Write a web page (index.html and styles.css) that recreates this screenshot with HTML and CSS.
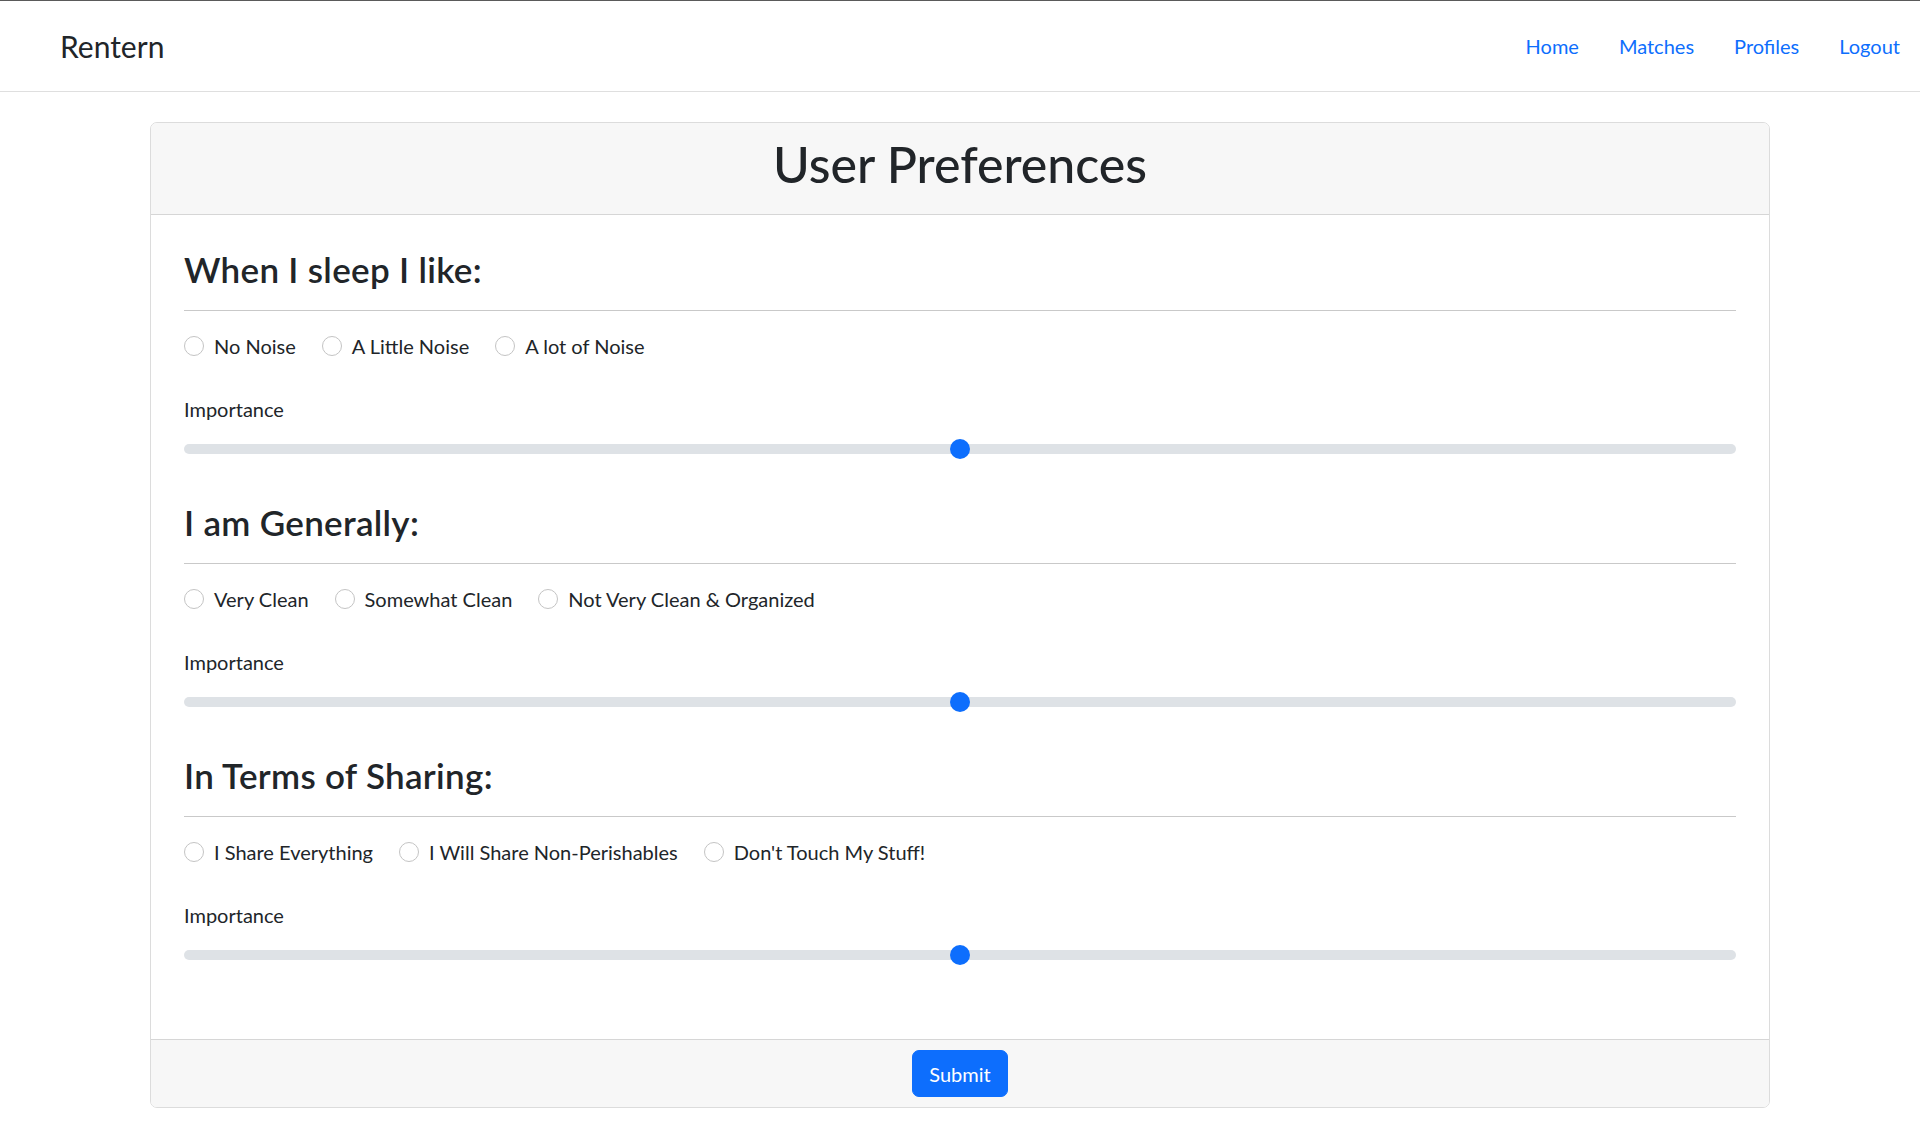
FILE: index.html
```html
<!DOCTYPE html>
<html lang="en">
<head>
<meta charset="utf-8">
<title>Rentern - User Preferences</title>
<link rel="stylesheet" href="styles.css">
</head>
<body>
<nav class="navbar">
  <a class="brand" href="#">Rentern</a>
  <ul class="nav">
    <li><a class="nav-link" href="#">Home</a></li>
    <li><a class="nav-link" href="#">Matches</a></li>
    <li><a class="nav-link" href="#">Profiles</a></li>
    <li><a class="nav-link" href="#">Logout</a></li>
  </ul>
</nav>
<main class="container">
  <form class="card">
    <div class="card-header"><h1 class="title">User Preferences</h1></div>
    <div class="card-body">
      <section class="pref">
        <h3 class="pref-title">When I sleep I like:</h3>
        <hr class="rule">
        <div class="options">
          <label class="check"><input type="radio" name="sleep" class="radio"><span>No Noise</span></label>
          <label class="check"><input type="radio" name="sleep" class="radio"><span>A Little Noise</span></label>
          <label class="check"><input type="radio" name="sleep" class="radio"><span>A lot of Noise</span></label>
        </div>
        <div class="field-label">Importance</div>
        <input type="range" class="range" min="0" max="10" value="5">
      </section>
      <section class="pref">
        <h3 class="pref-title">I am Generally:</h3>
        <hr class="rule">
        <div class="options">
          <label class="check"><input type="radio" name="clean" class="radio"><span>Very Clean</span></label>
          <label class="check"><input type="radio" name="clean" class="radio"><span>Somewhat Clean</span></label>
          <label class="check"><input type="radio" name="clean" class="radio"><span>Not Very Clean &amp; Organized</span></label>
        </div>
        <div class="field-label">Importance</div>
        <input type="range" class="range" min="0" max="10" value="5">
      </section>
      <section class="pref">
        <h3 class="pref-title">In Terms of Sharing:</h3>
        <hr class="rule">
        <div class="options">
          <label class="check"><input type="radio" name="share" class="radio"><span>I Share Everything</span></label>
          <label class="check"><input type="radio" name="share" class="radio"><span>I Will Share Non-Perishables</span></label>
          <label class="check"><input type="radio" name="share" class="radio"><span>Don't Touch My Stuff!</span></label>
        </div>
        <div class="field-label">Importance</div>
        <input type="range" class="range" min="0" max="10" value="5">
      </section>
    </div>
    <div class="card-footer"><button type="button" class="btn">Submit</button></div>
  </form>
</main>
</body>
</html>
```

FILE: styles.css
```css
* { box-sizing: border-box; }
html, body { margin: 0; padding: 0; }
body {
  font-family: "Lato", "Open Sans", sans-serif;
  font-size: 20px;
  line-height: 1.5;
  color: #212529;
  background: #fff;
  border-top: 1px solid #5a5a5a;
}
.navbar {
  display: flex;
  align-items: center;
  justify-content: space-between;
  height: 91px;
  padding-left: 61px;
  border-bottom: 1px solid #dfdfdf;
}
.brand {
  font-size: 30px;
  line-height: 40px;
  color: #212529;
  text-decoration: none;
  margin-left: -1px;
}
.nav {
  display: flex;
  list-style: none;
  margin: 0;
  padding: 0;
}
.nav-link {
  display: block;
  padding: 0 20px;
  font-size: 20px;
  line-height: 30px;
  color: #0d6efd;
  text-decoration: none;
}
.container {
  width: 1620px;
  margin: 30px auto 0;
}
.card {
  display: block;
  border: 1px solid #dcdcdc;
  border-radius: 7px;
  overflow: hidden;
}
.card-header {
  background: #f7f7f7;
  border-bottom: 1px solid #d6d6d6;
  padding: 11px 20px 10px;
  text-align: center;
}
.title {
  margin: 0 0 10px;
  font-size: 50px;
  line-height: 60px;
  font-weight: 500;
}
.card-body {
  padding: 33px 33px 69px;
}
.pref + .pref { margin-top: 37px; }
.pref-title {
  margin: 0;
  font-size: 35px;
  line-height: 42px;
  font-weight: 600;
  letter-spacing: 0.3px;
}
.rule {
  margin: 20px 0;
  border: 0;
  border-top: 1px solid #c9c9c9;
  height: 0;
}
.options {
  display: flex;
  height: 30px;
  align-items: center;
}
.check {
  display: flex;
  align-items: center;
  margin-right: 26px;
  line-height: 30px;
}
.radio {
  appearance: none;
  -webkit-appearance: none;
  width: 20px;
  height: 20px;
  margin: 0 10px 0 0;
  border: 1px solid #c4c4c4;
  border-radius: 50%;
  background: #fff;
}
.field-label {
  margin-top: 33px;
  margin-bottom: 10px;
  line-height: 30px;
}
.range {
  appearance: none;
  -webkit-appearance: none;
  display: block;
  width: 100%;
  height: 30px;
  margin: 0;
  padding: 0;
  background: transparent;
}
.range::-webkit-slider-runnable-track {
  height: 10px;
  background: #dee2e6;
  border-radius: 10px;
}
.range::-webkit-slider-thumb {
  -webkit-appearance: none;
  width: 20px;
  height: 20px;
  margin-top: -5px;
  border-radius: 50%;
  background: #0d6efd;
  border: 0;
}
.card-footer {
  background: #f7f7f7;
  border-top: 1px solid #d6d6d6;
  padding: 10px 20px;
  text-align: center;
}
.btn {
  font-family: inherit;
  font-size: 20px;
  line-height: 30px;
  padding: 7.5px 15px;
  width: 96px;
  color: #fff;
  background: #0d6efd;
  border: 1px solid #0d6efd;
  border-radius: 7px;
}
```
